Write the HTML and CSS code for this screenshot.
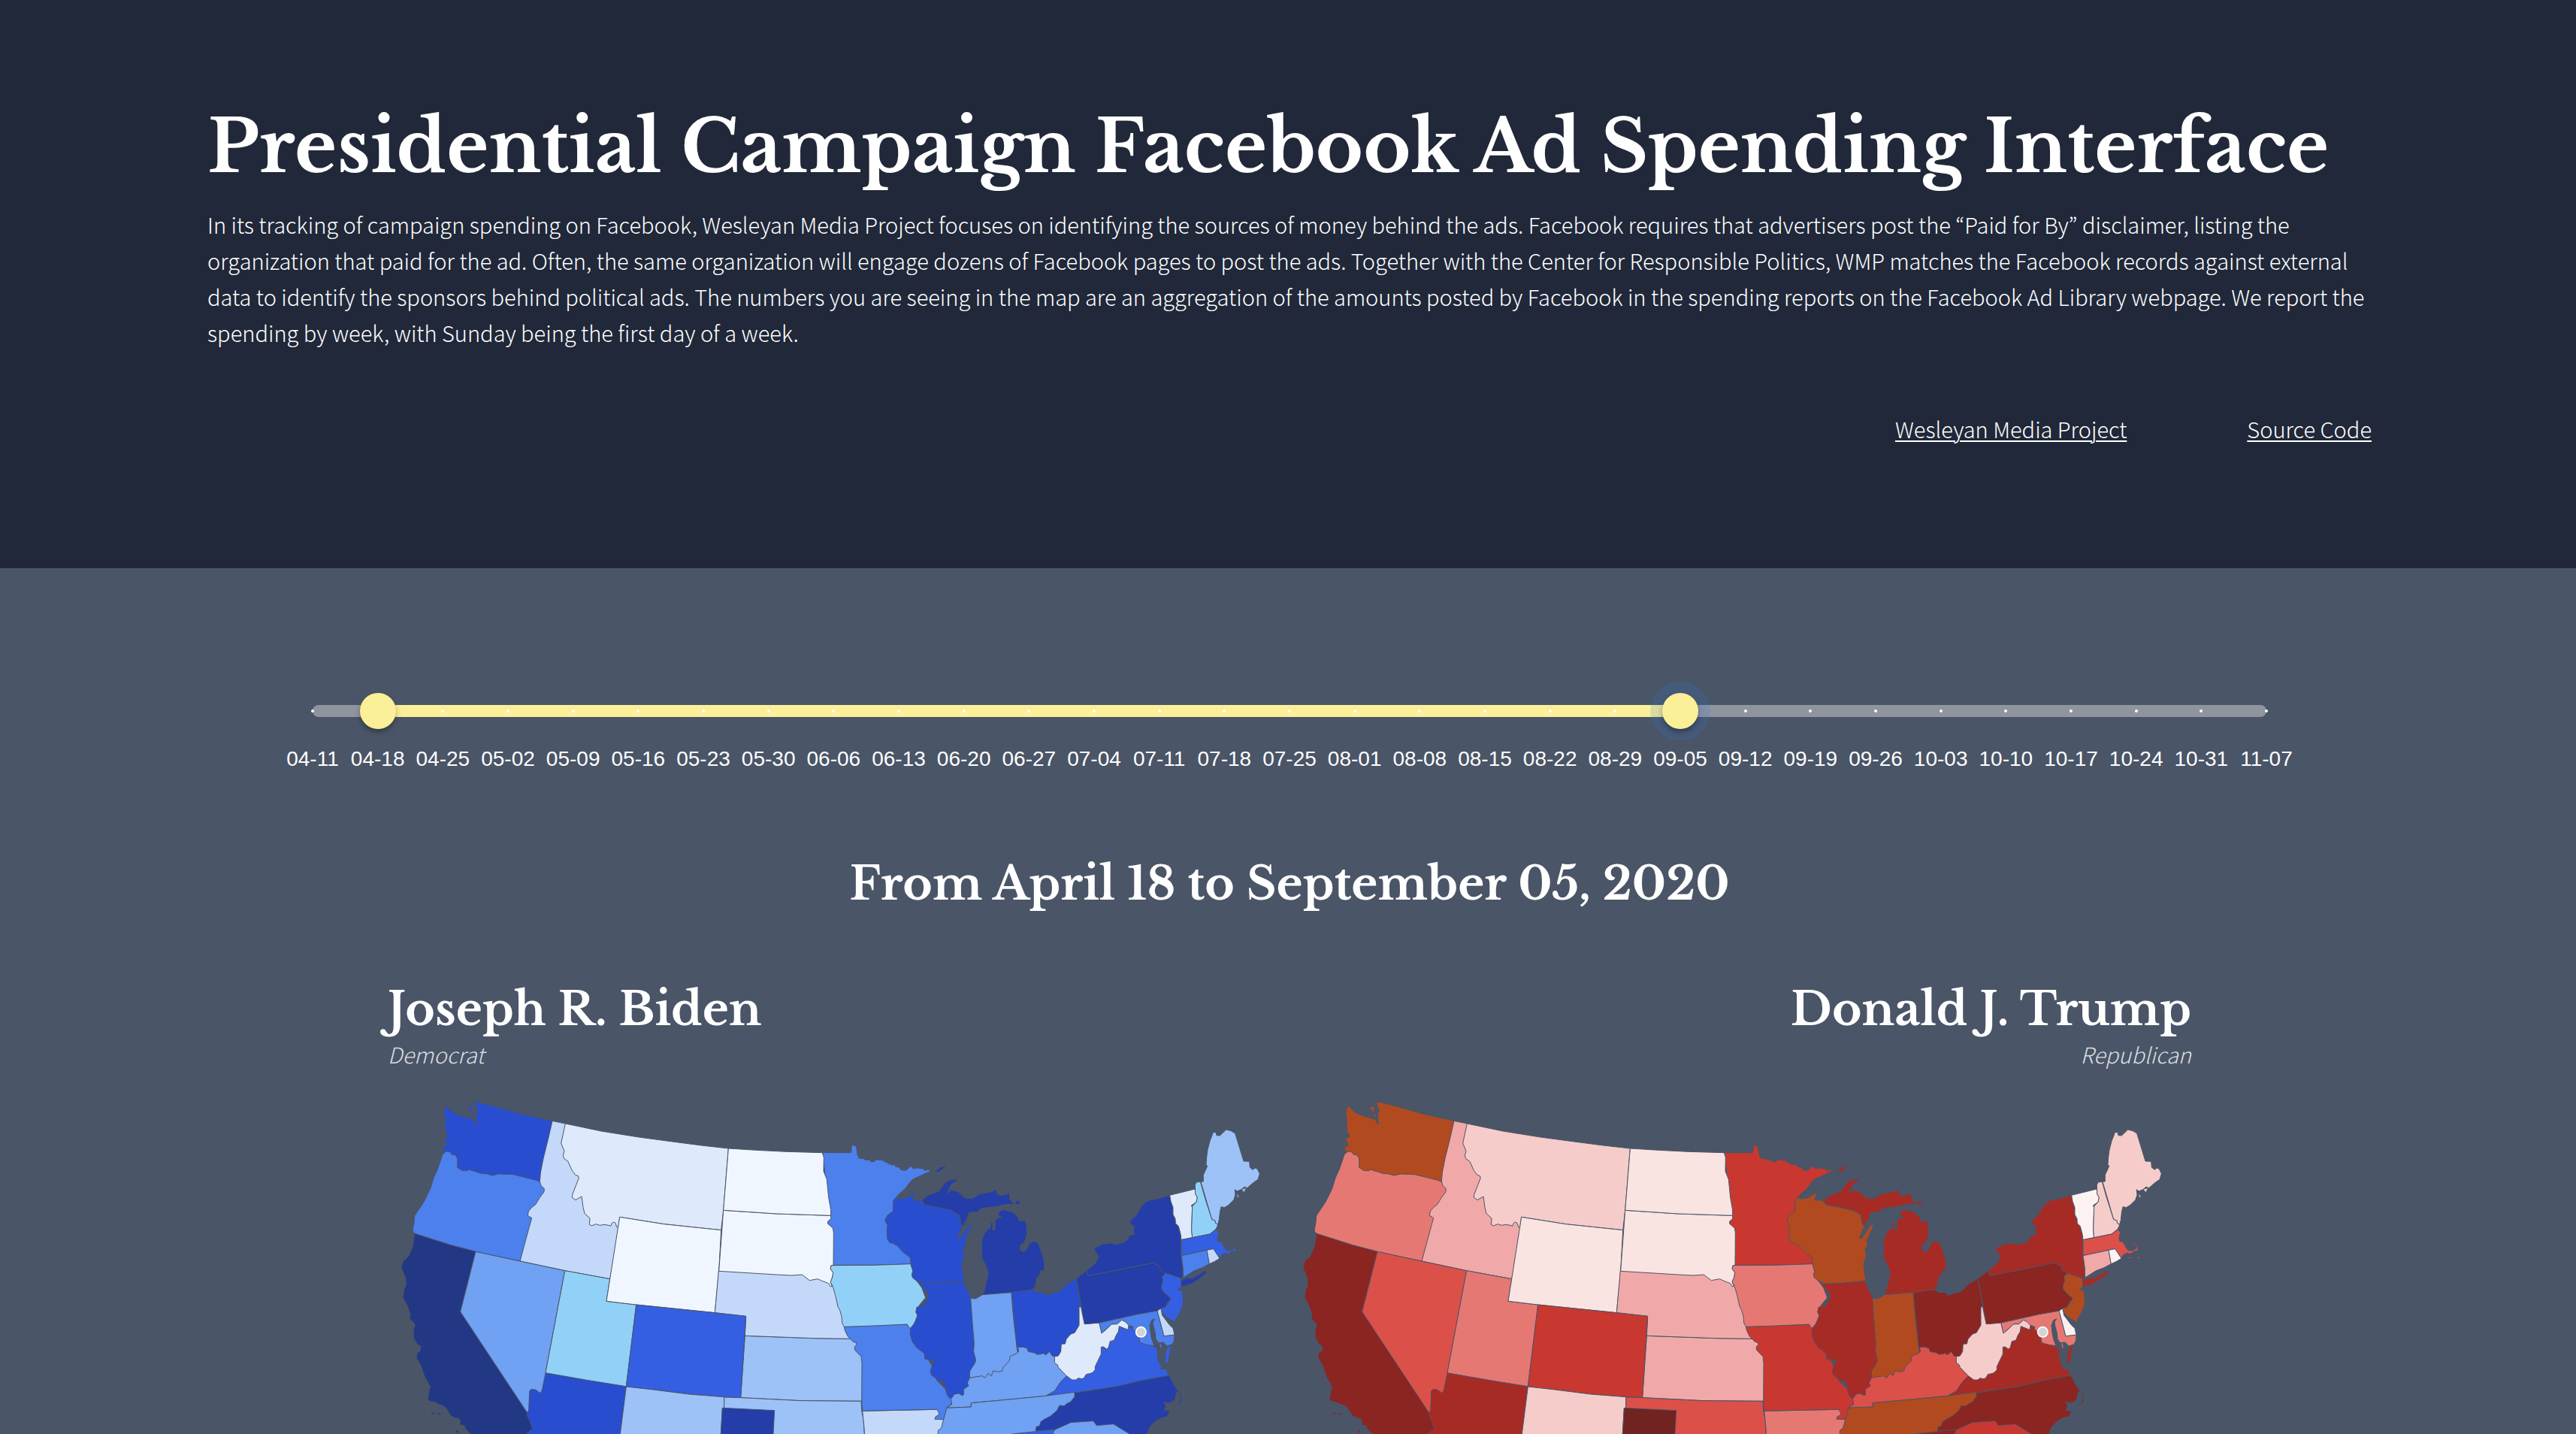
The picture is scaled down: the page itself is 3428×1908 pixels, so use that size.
FILE: index.html
```html
<!DOCTYPE html>
<html lang="en">
<head>
<meta charset="utf-8">
<title>Presidential Campaign Facebook Ad Spending Interface</title>
<link rel="stylesheet" href="styles.css">
</head>
<body>
<header class="header">
  <h1 class="title">Presidential Campaign Facebook Ad Spending Interface</h1>
  <p class="intro">In its tracking of campaign spending on Facebook, Wesleyan Media Project focuses on identifying the sources of money behind the ads. Facebook requires that advertisers post the “Paid for By” disclaimer, listing the organization that paid for the ad. Often, the same organization will engage dozens of Facebook pages to post the ads. Together with the Center for Responsible Politics, WMP matches the Facebook records against external data to identify the sponsors behind political ads. The numbers you are seeing in the map are an aggregation of the amounts posted by Facebook in the spending reports on the Facebook Ad Library webpage. We report the spending by week, with Sunday being the first day of a week.</p>
  <nav class="links">
    <a href="#wmp">Wesleyan Media Project</a>
    <a href="#source">Source Code</a>
  </nav>
</header>

<main class="main">
  <section class="slider">
    <div class="track">
      <div class="fill"></div>
      <input class="range" type="range" min="0" max="30" value="1" aria-label="Start week">
      <input class="range active" type="range" min="0" max="30" value="21" aria-label="End week">
    </div>
    <ol class="weeks">
      <li>04-11</li><li>04-18</li><li>04-25</li><li>05-02</li><li>05-09</li><li>05-16</li><li>05-23</li><li>05-30</li><li>06-06</li><li>06-13</li><li>06-20</li><li>06-27</li><li>07-04</li><li>07-11</li><li>07-18</li><li>07-25</li><li>08-01</li><li>08-08</li><li>08-15</li><li>08-22</li><li>08-29</li><li>09-05</li><li>09-12</li><li>09-19</li><li>09-26</li><li>10-03</li><li>10-10</li><li>10-17</li><li>10-24</li><li>10-31</li><li>11-07</li>
    </ol>
  </section>

  <h2 class="period">From April 18 to September 05, 2020</h2>

  <div class="candidates">
    <section class="candidate">
      <h3 class="name">Joseph R. Biden</h3>
      <p class="party">Democrat</p>
      <svg class="map biden" viewBox="48 0 3600 1404" role="img" aria-label="Spending by state, Joseph R. Biden">
        <defs>
          <path id="ID" d="M704 154L757 165L790 300L830 380L880 540L972 560L980 575L935 785L755 752L576 714L592 610L590 532L640 430L640 390Z"/>
          <path id="OR" d="M267 288L300 260L500 340L655 385L655 397L660 412L673 425L672 437L655 460L638 488L622 500L610 515L607 532L623 542L615 570L600 625L576 714L500 698L399 676L300 650L155 604L147 592L153 560L155 533L192 478L218 425L232 380L248 345Z"/>
          <path id="WA" d="M283 94L292 104L310 120L335 132L360 139L380 145L390 150L400 166L404 163L400 150L402 125L406 110L398 95L395 76L480 97L580 126L705 154L690 220L670 300L658 360L655 397L640 391L548 368L490 366L480 369L465 372L445 366L420 364L400 357L372 349L365 353L345 353L326 340L326 305L318 291L303 288L298 279L285 276L270 275L267 262L272 256L282 255L280 240L274 235L276 222L290 216L279 200L277 175L276 140L273 125L276 105ZM365 98L377 96L387 98L386 112L379 120L373 108ZM383 130L392 124L393 137L385 141Z"/>
          <path id="MT" d="M757 165L900 195L1050 219L1200 239L1300 252L1408 264L1388 512L1379 590L1150 566L974 538L968 580L962 578L957 562L950 558L943 562L938 574L930 571L912 568L895 571L880 566L862 573L853 568L855 543L834 524L828 500L822 456L798 470L784 460L785 448L811 382L808 374L797 370L784 352L767 315L752 305L748 292L753 275L740 243Z"/>
          <path id="WY" d="M974 538L1150 566L1379 590L1370 754L1354 920L1040 888L921 874Z"/>
          <path id="AZ" d="M678 1160L1000 1214L974 1420L590 1420L600 1300L620 1200Z"/>
          <path id="CA" d="M155 604L300 650L399 676L338 916L604 1318L604 1330L612 1345L626 1383L600 1404L590 1420L390 1420L378 1404L362 1388L352 1370L335 1367L338 1355L332 1343L315 1340L298 1330L285 1308L274 1294L250 1285L235 1277L220 1275L207 1268L212 1240L214 1225L218 1216L195 1175L180 1130L162 1100L164 1082L177 1072L180 1055L165 1045L151 1020L150 990L157 967L135 943L137 925L125 890L108 858L113 825L120 812L120 785L102 740L108 715L130 695L148 655ZM220 1320L230 1317L236 1324L224 1327ZM242 1316L267 1327L250 1328ZM315 1386L326 1388L335 1402L324 1400Z"/>
          <path id="NV" d="M399 676L500 698L755 752L678 1160L665 1225L660 1238L653 1239L640 1228L622 1225L614 1232L611 1310L604 1318L338 916Z"/>
          <path id="UT" d="M755 752L935 785L921 874L1040 888L1000 1214L850 1190L678 1160Z"/>
          <path id="CO" d="M1040 888L1354 920L1478 934L1457 1259L1390 1256L1250 1245L1100 1226L1000 1215Z"/>
          <path id="NM" d="M1000 1215L1100 1226L1250 1245L1391 1256L1391 1300L1384 1302L1377 1420L974 1420Z"/>
          <path id="OK" d="M1391 1257L1457 1259L1700 1271L1938 1273L1940 1310L1947 1345L1952 1420L1377 1420L1391 1300Z"/>
          <path id="TX" d="M1384 1300L1592 1310L1586 1420L1377 1420Z"/>
          <path id="KS" d="M1474 1012L1640 1018L1750 1022L1900 1024L1960 1070L1955 1273L1700 1271L1457 1259Z"/>
          <path id="NE" d="M1370 740L1820 770L1870 960L1900 1024L1750 1022L1640 1018L1474 1012L1478 934L1354 920Z"/>
          <path id="MN" transform="translate(1740 180)" d="M45 101L158 101L160 70L178 74L184 112L190 123L208 125L214 130L235 131L237 138L250 137L258 129L283 131L310 146L325 151L333 147L335 157L352 160L355 169L370 172L380 170L390 159L402 155L405 165L420 162L445 165L455 174L460 168L474 170L470 177L405 207L392 220L375 243L340 275L340 460L395 520L397 545L250 550L80 550L70 400L60 360L60 250Z"/>
          <path id="SD" transform="translate(900 0)" d="M488 511L700 525L917 532L917 545L905 555L905 565L925 582L928 600L927 730L917 732L915 745L926 760L922 780L915 797L922 815L915 815L908 803L880 792L865 785L832 791L802 768L760 771L700 768L470 754Z"/>
          <path id="ND" transform="translate(900 0)" d="M508 264L620 271L740 277L883 281L889 300L888 355L901 388L908 460L917 510L917 532L700 525L488 511Z"/>
          <path id="AR" transform="translate(1740 180)" d="M203 1132L500 1126L540 1150L528 1166L530 1240L212 1240L210 1200L206 1160Z"/>
          <path id="MO" transform="translate(1740 180)" d="M130 795L382 786L400 803L450 900L480 950L500 1010L550 1060L563 1078L562 1100L540 1120L535 1140L528 1166L492 1165L495 1155L507 1148L509 1140L500 1126L203 1132L200 1093L201 940L198 915L172 888L172 875L180 868L178 860L165 855L145 835L133 810Z"/>
          <path id="IA" transform="translate(1740 180)" d="M78 551L250 550L397 545L410 600L440 640L455 680L430 710L420 760L400 803L390 800L382 786L250 792L130 796L122 780L120 755L113 730L105 715L95 670L85 635L75 617L82 600L86 580L75 565Z"/>
          <path id="WI" transform="translate(1740 180)" d="M331 285L340 280L350 285L375 282L405 264L412 262L411 272L402 290L418 290L435 292L441 300L452 310L500 318L560 332L588 348L597 388L603 395L590 425L583 440L590 445L605 425L628 390L638 384L637 398L622 432L613 450L615 470L606 485L610 515L600 545L605 590L609 613L560 618L500 623L436 625L433 617L418 612L403 600L400 585L406 572L397 553L394 520L362 496L345 475L325 463L312 461L302 445L301 400L304 392L293 372L302 352L326 334L326 295Z"/>
          <path id="MI" transform="translate(1740 180)" d="M440 291L465 272L510 254L530 225L548 211L578 206L580 213L560 225L541 262L560 250L588 258L600 272L615 283L645 283L670 266L715 258L738 248L741 268L760 272L790 263L792 288L811 306L770 308L740 316L675 324L665 337L630 340L620 365L606 393L596 388L590 350L560 332L500 318L452 310ZM815 294L830 293L833 303L825 308L812 308ZM494 176L512 160L537 152L530 162L505 180ZM748 335L765 328L800 338L822 355L830 375L852 372L860 400L858 435L848 462L833 470L833 490L850 497L862 480L870 462L888 454L905 462L922 510L930 545L928 572L914 572L910 590L898 603L895 630L882 649L800 660L683 668L690 650L700 610L706 580L690 540L679 517L680 450L690 425L700 410L714 402L716 380L725 380L722 410L732 410L733 372L745 362L760 360L744 350Z"/>
          <path id="IN" transform="translate(1740 180)" d="M634 682L655 684L683 668L798 659L805 750L820 880L830 920L700 1040L620 1020L640 930L640 860Z"/>
          <path id="OH" transform="translate(2640 120)" d="M-102 719L-17 708L0 718L25 720L40 731L60 722L88 716L120 685L157 663L175 775L190 850L140 1000L60 1010L-70 1000L-80 940Z"/>
          <path id="VA" transform="translate(2640 120)" d="M40 1132L70 1110L75 1100L100 1068L118 1050L250 900L330 850L366 850L460 930L480 945L483 990L498 1015L490 1025L515 1025L528 1050L420 1070L320 1094L170 1117L150 1118ZM537 930L530 960L526 990L518 1005L511 995L513 960L520 938Z"/>
          <path id="KY" transform="translate(2220 1020)" d="M60 280L157 276L157 260L300 247L455 232L490 212L515 175L540 150L520 100L490 74L480 72L470 55L455 68L445 62L430 66L420 66L410 60L385 55L382 43L365 37L343 38L347 55L340 62L312 74L310 92L285 118L280 133L265 136L245 132L238 152L225 142L212 160L200 152L150 160L110 190L75 235L80 265Z"/>
          <path id="IL" transform="translate(1740 180)" d="M436 625L500 623L609 613L612 635L628 660L635 682L642 780L649 860L647 895L656 930L650 945L632 972L631 1000L622 1020L627 1032L607 1045L607 1068L600 1070L588 1062L570 1065L560 1080L550 1080L540 1065L536 1050L537 1040L525 1015L510 1012L480 990L474 975L488 930L452 925L450 902L420 880L402 855L393 825L396 800L404 790L415 780L417 765L424 752L416 738L420 718L450 710L466 675L463 660L440 637Z"/>
          <path id="GA" transform="translate(2640 120)" d="M-120 1290L-5 1260L90 1255L65 1310L-150 1310Z"/>
          <path id="NC" transform="translate(2640 120)" d="M140 1118L170 1117L320 1094L420 1070L528 1050L548 1090L562 1110L555 1125L550 1148L530 1160L505 1157L515 1170L510 1190L530 1192L520 1215L500 1218L470 1235L450 1258L440 1284L435 1310L370 1310L225 1250L135 1250L75 1265L0 1272L-30 1274L-10 1230L50 1180ZM563 1105L572 1115L579 1140L577 1157L548 1177L572 1153L574 1138L568 1118Z"/>
          <path id="TN" transform="translate(2220 1020)" d="M60 280L157 276L157 260L300 247L455 232L570 217L570 235L555 255L540 262L528 272L510 270L500 290L475 312L450 325L435 335L430 352L417 355L415 374L320 384L300 410L24 410L25 370L38 360L47 325Z"/>
          <path id="SC" transform="translate(2640 120)" d="M75 1265L135 1238L225 1232L238 1250L305 1244L370 1284L390 1310L65 1310L65 1275Z"/>
          <path id="MD" transform="translate(2640 120)" d="M248 840L400 806L480 792L507 893L549 888L548 910L540 926L518 933L505 918L485 920L474 905L472 882L465 855L462 838L470 824L458 830L450 850L453 880L458 905L468 932L440 928L412 920L408 905L412 890L398 878L383 868L383 856L366 850L338 829L320 845L298 846L258 882ZM488 921L494 921L499 938L493 942Z"/>
          <path id="WV" transform="translate(2640 120)" d="M168 778L175 775L182 810L190 845L248 840L258 882L275 868L298 846L320 845L338 829L352 836L366 850L363 868L328 854L325 875L315 892L308 910L292 914L285 940L278 945L265 936L256 937L256 965L232 1015L232 1028L220 1040L210 1043L196 1046L188 1060L180 1064L165 1061L155 1068L140 1068L118 1052L85 1018L82 1008L70 1000L70 975L85 972L95 955L97 925L112 924L117 905L135 885L150 880L168 850Z"/>
          <path id="PA" transform="translate(2640 120)" d="M157 663L200 630L203 653L467 600L472 607L488 612L494 632L515 642L500 655L503 672L497 690L497 705L510 722L535 743L520 760L512 778L495 783L480 792L400 806L248 840L190 845Z"/>
          <path id="NY" transform="translate(2640 120)" d="M203 653L200 630L235 600L246 578L228 545L232 540L262 526L300 522L318 528L355 515L372 490L388 488L385 470L388 455L372 445L372 432L395 412L415 378L440 353L480 345L530 331L534 355L543 380L543 408L552 425L553 443L565 455L574 490L574 560L580 600L583 655L575 663L515 642L494 632L488 612L472 607L467 600ZM575 672L600 660L620 663L650 645L668 632L678 638L655 660L620 683L600 690L575 697Z"/>
          <path id="VT" transform="translate(2640 120)" d="M530 331L631 306L632 325L640 340L636 358L616 372L620 380L617 470L620 500L576 509L574 490L565 455L553 443L552 425L543 408L543 380L534 355Z"/>
          <path id="NH" transform="translate(2640 120)" d="M631 290L636 279L652 277L670 340L698 427L712 433L722 450L715 465L700 478L690 486L620 500L617 470L620 375L636 358L640 340L632 325Z"/>
          <path id="ME" transform="translate(2640 120)" d="M654 277L664 276L664 250L680 215L675 208L677 180L681 150L690 115L704 79L714 80L717 92L730 93L755 69L775 74L791 84L825 195L848 196L850 220L862 229L870 222L880 226L889 245L882 268L862 282L838 303L828 297L816 308L806 312L798 315L790 308L792 330L785 350L765 370L748 380L735 377L730 400L727 430L722 447L712 443L712 433L698 427ZM815 308L836 300L828 320ZM797 322L807 335L800 344Z"/>
          <path id="MA" transform="translate(2640 120)" d="M576 509L620 500L690 486L715 467L725 480L720 500L722 515L735 517L750 543L758 552L775 552L788 543L787 530L775 524L768 522L775 519L790 528L796 552L780 555L765 565L752 562L738 568L728 583L704 545L678 550L576 572ZM750 583L765 576L770 584ZM788 583L800 575L803 584Z"/>
          <path id="CT" transform="translate(2640 120)" d="M576 572L678 550L688 605L660 620L628 632L584 660L583 620Z"/>
          <path id="RI" transform="translate(2640 120)" d="M678 550L704 545L729 583L710 595L688 605Z"/>
          <path id="NJ" transform="translate(2640 120)" d="M515 642L575 663L575 697L562 710L578 710L583 735L582 770L570 800L556 822L548 845L543 832L522 822L500 800L495 783L512 778L535 743L510 722L497 705L497 690L503 672L500 655Z"/>
          <path id="DE" transform="translate(2640 120)" d="M480 792L495 783L500 810L515 830L530 850L543 862L549 888L507 893Z"/>
        </defs>
        <use href="#ID" class="l3"/><use href="#OR" class="l6"/><use href="#WA" class="l8"/><use href="#MT" class="l2"/><use href="#AZ" class="l8"/><use href="#CA" class="l10"/><use href="#NV" class="l5"/><use href="#UT" class="new"/><use href="#WY" class="l1"/><use href="#KS" class="l4"/><use href="#NE" class="l3"/><use href="#CO" class="l7"/><use href="#NM" class="l4"/><use href="#OK" class="l4"/><use href="#TX" class="l9"/><use href="#MN" class="l6"/><use href="#AR" class="l3"/><use href="#MO" class="l6"/><use href="#IA" class="new"/><use href="#SD" class="l1"/><use href="#ND" class="l1"/><use href="#WI" class="l8"/><use href="#MI" class="l9"/><use href="#IN" class="l5"/><use href="#OH" class="l8"/><use href="#VA" class="l7"/><use href="#KY" class="l5"/><use href="#IL" class="l8"/><use href="#GA" class="l7"/><use href="#NC" class="l9"/><use href="#TN" class="l5"/><use href="#SC" class="l5"/><use href="#MD" class="l6"/><use href="#WV" class="l2"/><use href="#PA" class="l9"/><use href="#NY" class="l9"/><use href="#VT" class="l2"/><use href="#NH" class="new"/><use href="#ME" class="l4"/><use href="#MA" class="l7"/><use href="#CT" class="l6"/><use href="#RI" class="l3"/><use href="#NJ" class="l7"/><use href="#DE" class="l3"/>
        <circle class="dc" cx="3055" cy="997" r="20"/>
      </svg>
    </section>
    <section class="candidate right">
      <h3 class="name">Donald J. Trump</h3>
      <p class="party">Republican</p>
      <svg class="map trump" viewBox="48 0 3600 1404" role="img" aria-label="Spending by state, Donald J. Trump">
        <use href="#ID" class="l4"/><use href="#OR" class="l5"/><use href="#WA" class="new"/><use href="#MT" class="l3"/><use href="#AZ" class="l8"/><use href="#CA" class="l9"/><use href="#NV" class="l6"/><use href="#UT" class="l5"/><use href="#WY" class="l2"/><use href="#KS" class="l4"/><use href="#NE" class="l4"/><use href="#CO" class="l7"/><use href="#NM" class="l3"/><use href="#OK" class="l6"/><use href="#TX" class="l10"/><use href="#MN" class="l7"/><use href="#AR" class="l5"/><use href="#MO" class="l7"/><use href="#IA" class="l5"/><use href="#SD" class="l2"/><use href="#ND" class="l2"/><use href="#WI" class="new"/><use href="#MI" class="l8"/><use href="#IN" class="new"/><use href="#OH" class="l9"/><use href="#VA" class="l8"/><use href="#KY" class="l6"/><use href="#IL" class="l8"/><use href="#GA" class="l9"/><use href="#NC" class="l9"/><use href="#TN" class="new"/><use href="#SC" class="l7"/><use href="#MD" class="l5"/><use href="#WV" class="l3"/><use href="#PA" class="l9"/><use href="#NY" class="l8"/><use href="#VT" class="l1"/><use href="#NH" class="l3"/><use href="#ME" class="l3"/><use href="#MA" class="l6"/><use href="#CT" class="l4"/><use href="#RI" class="l1"/><use href="#NJ" class="new"/><use href="#DE" class="l1"/>
        <circle class="dc" cx="3055" cy="997" r="20"/>
      </svg>
    </section>
  </div>
</main>
</body>
</html>
```
FILE: styles.css
```css
* { box-sizing: border-box; }

body {
  margin: 0;
  background: #4a5567;
  color: #fff;
  font-family: "Noto Sans CJK KR", "Open Sans", sans-serif;
  font-weight: 300;
  font-size: 29px;
  line-height: 48px;
}

h1, h2, h3, p, ol { margin: 0; padding: 0; }

h1, h2, h3 {
  font-family: "Libre Baskerville", "Liberation Serif", serif;
  font-weight: 700;
}

/* Header */
.header {
  padding: 124px 272px 162px 276px;
  background: #202839;
}
.title {
  margin-bottom: 6px;
  font-size: 96px;
  line-height: 144px;
}
.links {
  display: flex;
  justify-content: flex-end;
  gap: 160px;
  margin-top: 80px;
}
.links a {
  color: inherit;
  text-decoration: underline;
  text-decoration-thickness: 2px;
  text-underline-offset: 3px;
}

/* Week slider */
.main { padding: 182px 0 0 4px; }
.slider {
  width: 76%;
  max-width: 2600px;
  margin: 0 auto 110px;
}
.track {
  position: relative;
  height: 16px;
  border-radius: 8px;
  background: #8f959f;
}
.fill {
  position: absolute;
  top: 0;
  bottom: 0;
  left: calc(100% / 30);
  right: calc(100% / 30 * 9);
  background: #fbef98;
}
.range {
  position: absolute;
  z-index: 2;
  top: -16px;
  left: -24px;
  width: calc(100% + 48px);
  height: 48px;
  margin: 0;
  appearance: none;
  background: transparent;
  pointer-events: none;
}
.range::-webkit-slider-thumb {
  appearance: none;
  width: 48px;
  height: 48px;
  border-radius: 50%;
  background: #fbef98;
  box-shadow: 0 4px 8px -2px rgba(0, 0, 0, .5);
  pointer-events: auto;
}
.range.active::-webkit-slider-thumb {
  box-shadow: 0 4px 8px -2px rgba(0, 0, 0, .5), 0 0 0 16px rgba(50, 116, 216, .16);
}
.weeks {
  position: relative;
  z-index: 1;
  display: grid;
  grid-template-columns: repeat(31, 1fr);
  margin: -10px calc(-100% / 60) 0;
  list-style: none;
  font: 400 28px/40px "Liberation Sans", Arial, sans-serif;
  text-align: center;
  white-space: nowrap;
}
.weeks li::before {
  content: "";
  display: block;
  width: 4px;
  height: 4px;
  margin: 0 auto 42px;
  border-radius: 50%;
  background: #fff;
}

/* Candidates */
.period {
  margin-bottom: 96px;
  font-size: 60px;
  line-height: 72px;
  text-align: center;
}
.candidates {
  display: grid;
  grid-template-columns: 1fr 1fr;
  width: 71%;
  max-width: 2400px;
  margin: 0 auto;
}
.right { text-align: right; }
.name {
  font-size: 60px;
  line-height: 70px;
}
.party {
  margin-bottom: 14px;
  font-style: italic;
  color: #dadde1;
}

/* Maps */
.map {
  display: block;
  width: 100%;
  stroke: #4a5567;
  stroke-width: 3px;
  stroke-linejoin: round;
}
.dc { fill: #d3d3d3; stroke: #fff; stroke-width: 5px; }

.biden .l1 { fill: #f0f6ff; }
.biden .l2 { fill: #dee9fb; }
.biden .l3 { fill: #c4d8fa; }
.biden .l4 { fill: #9cc2f8; }
.biden .l5 { fill: #70a1f2; }
.biden .l6 { fill: #4c80ed; }
.biden .l7 { fill: #355fe2; }
.biden .l8 { fill: #294dcf; }
.biden .l9 { fill: #243da8; }
.biden .l10 { fill: #233884; }
.biden .new { fill: #92d1f7; }

.trump .l1 { fill: #fcf2f2; }
.trump .l2 { fill: #f9e4e2; }
.trump .l3 { fill: #f5ccca; }
.trump .l4 { fill: #f0a9a8; }
.trump .l5 { fill: #e67874; }
.trump .l6 { fill: #dc504a; }
.trump .l7 { fill: #c83830; }
.trump .l8 { fill: #a72b25; }
.trump .l9 { fill: #8a2521; }
.trump .l10 { fill: #702320; }
.trump .new { fill: #b24a20; }
```
